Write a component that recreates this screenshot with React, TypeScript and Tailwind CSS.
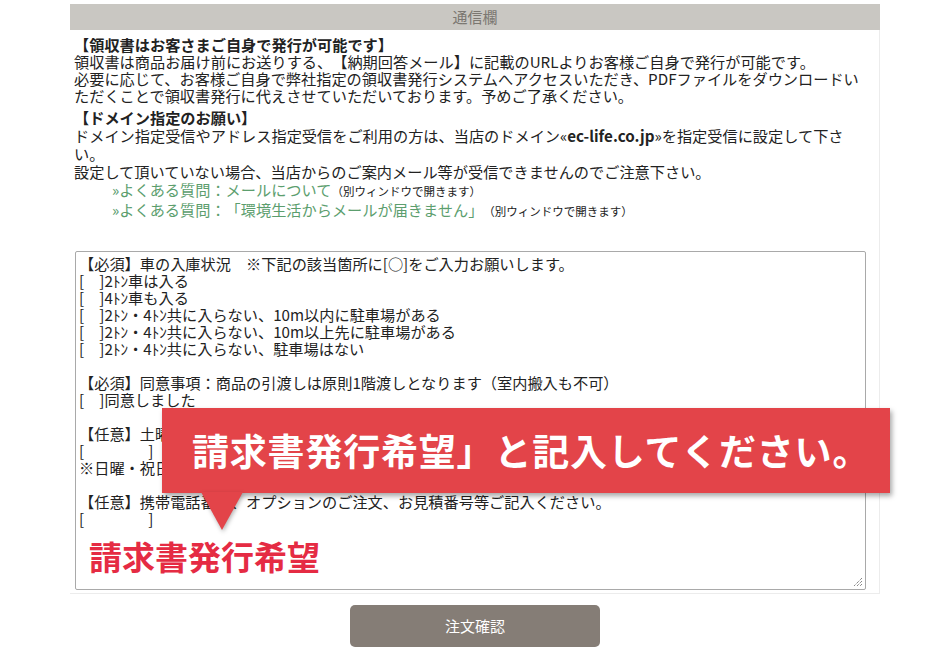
const jp = { fontFamily: '"Noto Sans CJK JP", "Noto Sans", sans-serif' };

const memoLines = [
  "【必須】車の入庫状況　※下記の該当箇所に[○]をご入力お願いします。",
  "[　]2ﾄﾝ車は入る",
  "[　]4ﾄﾝ車も入る",
  "[　]2ﾄﾝ・4ﾄﾝ共に入らない、10m以内に駐車場がある",
  "[　]2ﾄﾝ・4ﾄﾝ共に入らない、10m以上先に駐車場がある",
  "[　]2ﾄﾝ・4ﾄﾝ共に入らない、駐車場はない",
  "",
  "【必須】同意事項：商品の引渡しは原則1階渡しとなります（室内搬入も不可）",
  "[　]同意しました",
  "",
  "【任意】土曜日の配送をご希望の方は日時をご記入ください。",
  "[　　　　 ]",
  "※日曜・祝日の配送はお受けできません。",
  "",
  "【任意】携帯電話番号、オプションのご注文、お見積番号等ご記入ください。",
  "[　　　　 ]",
];

function ResizeGrip() {
  return (
    <svg width="12" height="12" viewBox="0 0 12 12" className="absolute bottom-[2px] right-[2px]">
      <path d="M11 3 L3 11 M11 6 L6 11 M11 9 L9 11" stroke="#555" strokeWidth="1" strokeDasharray="1 1" />
    </svg>
  );
}

export default function App() {
  return (
    <div
      className="relative w-[948px] h-[652px] bg-white overflow-hidden text-[#222] [text-spacing-trim:space-all]"
      style={jp}
    >
      <div className="ml-[70px] w-[810px] pt-[4px]">
        <div className="h-[26px] bg-[#c9c7c2] flex items-center justify-center text-[15px] text-[#7b7771]">
          通信欄
        </div>

        <div className="border-r border-b border-[#ececec] pl-[4px] pb-[3px]">
          <div className="pt-[6px] text-[15.2px] leading-[17px] whitespace-nowrap">
            <p className="font-bold">【領収書はお客さまご自身で発行が可能です】</p>
            <p>領収書は商品お届け前にお送りする、【納期回答メール】に記載のURLよりお客様ご自身で発行が可能です。</p>
            <p>
              必要に応じて、お客様ご自身で弊社指定の領収書発行システムへアクセスいただき、PDFファイルをダウンロードい
              <br />
              ただくことで領収書発行に代えさせていただいております。予めご了承ください。
            </p>
          </div>

          <div className="mt-[4px] text-[15.2px] leading-[18px] whitespace-nowrap">
            <p className="font-bold">【ドメイン指定のお願い】</p>
            <p>
              ドメイン指定受信やアドレス指定受信をご利用の方は、当店のドメイン«<span className="font-bold">ec-life.co.jp</span>»を指定受信に設定して下さ
              <br />
              い。
            </p>
            <p>設定して頂いていない場合、当店からのご案内メール等が受信できませんのでご注意下さい。</p>
            <p className="pl-[38px] text-[#5c9e6e]">
              »よくある質問：メールについて
              <span className="text-[11.5px] text-[#222]">（別ウィンドウで開きます）</span>
            </p>
            <p className="pl-[38px] text-[#5c9e6e]">
              »よくある質問：「環境生活からメールが届きません」
              <span className="text-[11.5px] text-[#222]">（別ウィンドウで開きます）</span>
            </p>
          </div>

          <div className="relative mt-[31px] ml-[1px] w-[791px] h-[339px] border border-[#a9a9a9] rounded-[2px] bg-white px-[3px] pt-[3px]">
            <div className="text-[15.2px] leading-[17px] whitespace-pre">
              {memoLines.map((l, i) => (
                <div key={i} className="h-[17px]">
                  {l}
                </div>
              ))}
            </div>
            <p className="mt-[10px] pl-[10px] text-[33px] leading-[38px] font-bold text-[#e52b43]">請求書発行希望</p>
            <ResizeGrip />
          </div>
        </div>

        <div className="flex justify-center pt-[11px]">
          <button className="w-[250px] h-[42px] rounded-[5px] bg-[#857d76] text-white text-[15px]">注文確認</button>
        </div>
      </div>

      {/* callout */}
      <div className="absolute left-[162px] top-[408px] w-[728px] h-[85px] bg-[#e34449] shadow-[2px_3px_5px_rgba(0,0,0,0.35)] flex items-center pl-[30px]">
        <span className="text-white font-bold text-[37px] leading-none tracking-[0.8px]">
          請求書発行希望」と記入してください。
        </span>
      </div>
      <svg
        className="absolute left-[198px] top-[492px] drop-shadow-[1px_2px_2px_rgba(0,0,0,0.3)]"
        width="48"
        height="40"
        viewBox="0 0 48 40"
      >
        <path d="M3 0 L45 0 L24 38 Z" fill="#e34449" />
      </svg>
    </div>
  );
}
